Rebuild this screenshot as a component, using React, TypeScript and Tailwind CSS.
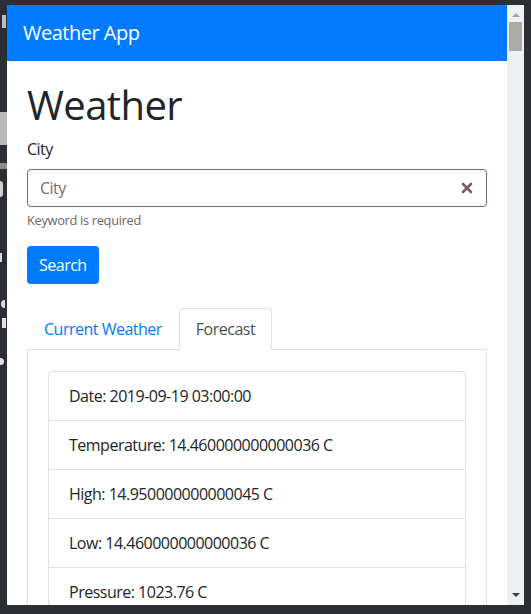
import { ReactNode } from "react";

const forecast = [
    "Date: 2019-09-19 03:00:00",
    "Temperature: 14.460000000000036 C",
    "High: 14.950000000000045 C",
    "Low: 14.460000000000036 C",
    "Pressure: 1023.76 C",
];

function BackdropStrip() {
    // bits of the page that sits behind the popup
    return (
        <div className="flex w-[7px] flex-col overflow-hidden bg-[#2b2f33]">
            <div className="ml-[2px] mt-[10px] h-[13px] w-[4px] bg-[#bdbdbd]" />
            <div className="mt-[84px] h-[33px] w-[7px] bg-[#b9b9b9]" />
            <div className="mt-[18px] h-[6px] w-[7px] bg-[#8d8d8d]" />
            <div className="mt-[12px] h-[16px] w-[3px] rounded-r-full bg-[#cfcfcf]" />
            <div className="mt-[56px] h-[9px] w-[2px] bg-[#d8d8d8]" />
            <div className="mt-[38px] ml-[1px] h-[8px] w-[4px] rounded-l-full bg-[#e0e0e0]" />
            <div className="mt-[10px] ml-[2px] h-[10px] w-[4px] bg-[#e0e0e0]" />
            <div className="mt-[30px] h-[7px] w-[4px] rounded-r-full bg-[#e0e0e0]" />
        </div>
    );
}

function Scrollbar() {
    return (
        <div className="flex w-[17px] flex-col items-center bg-[#eef0f1]">
            <div className="mt-[8px] h-0 w-0 border-x-[4px] border-b-[4px] border-x-transparent border-b-[#a0a3a6]" />
            <div className="mt-[5px] h-[29px] w-[13px] bg-[#ababab]" />
            <div className="flex-1" />
            <div className="mb-[8px] h-0 w-0 border-x-[4px] border-t-[4px] border-x-transparent border-t-[#3a3d40]" />
        </div>
    );
}

function Tab({ active, children }: { active?: boolean; children: ReactNode }) {
    return (
        <div
            className={
                active
                    ? "-mb-px rounded-t-[4px] border border-[#dee2e6] border-b-white bg-white px-4 py-2 leading-6 text-[#495057]"
                    : "-mb-px rounded-t-[4px] border border-transparent px-4 py-2 leading-6 text-[#007bff]"
            }
        >
            {children}
        </div>
    );
}

export default function App() {
    return (
        <div
            className="flex h-[614px] w-[531px] flex-col overflow-hidden bg-[#2b2f33] text-[16px] tracking-[-0.5px] text-[#212529]"
            style={{ fontFamily: '"Open Sans", "Noto Sans", sans-serif' }}
        >
            <div className="h-[5px]" />
            <div className="flex h-[600px]">
                <BackdropStrip />

                <div className="flex w-[500px] flex-col overflow-hidden bg-white">
                    <div className="flex h-[56px] shrink-0 items-center bg-[#007bff] px-4 text-[20px] text-white">
                        Weather App
                    </div>

                    <div className="px-5 pt-5">
                        <h1 className="mb-2 text-[40px] font-medium leading-[1.2] tracking-[-0.6px]">Weather</h1>

                        <label className="mb-2 block leading-6">City</label>
                        <div className="flex h-[38px] items-center rounded-[4px] border border-[#8c6268] pl-3 pr-3">
                            <span className="flex-1 text-[#7a6a6d]">City</span>
                            <svg width="12" height="12" viewBox="0 0 12 12" className="mr-[1px]">
                                <path d="M2 2 L10 10 M10 2 L2 10" stroke="#7a5d63" strokeWidth="2.6" strokeLinecap="round" />
                            </svg>
                        </div>
                        <div className="mt-1 text-[12.8px] leading-[19px] tracking-[-0.3px] text-[#6e6466]">Keyword is required</div>

                        <button className="mt-4 h-[38px] rounded-[4px] bg-[#007bff] px-3 leading-6 text-white">
                            Search
                        </button>

                        <div className="mt-6 flex border-b border-[#dee2e6]">
                            <Tab>Current Weather</Tab>
                            <Tab active>Forecast</Tab>
                        </div>

                        <div className="border-x border-[#dee2e6] px-5 pt-[21px]">
                            <ul className="rounded-t-[4px] border-x border-t border-[#dee2e6]">
                                {forecast.map((line) => (
                                    <li key={line} className="border-b border-[#dee2e6] px-5 py-3 leading-6">
                                        {line}
                                    </li>
                                ))}
                            </ul>
                        </div>
                    </div>
                </div>

                <Scrollbar />
                <div className="w-[7px]" />
            </div>
        </div>
    );
}
